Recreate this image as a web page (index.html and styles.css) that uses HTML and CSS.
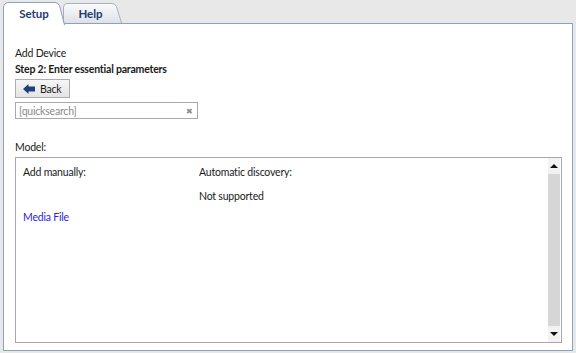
FILE: index.html
```html
<!DOCTYPE html>
<html>
<head>
    <title>Add Device</title>
    <link rel="stylesheet" href="styles.css">
</head>
<body>
    <div class="tabs">
        <div class="tab tab-active">
            <svg class="tab-shape" width="62" height="23" viewBox="0 0 62 23">
                <path d="M0.5 23 L0.5 6 Q0.5 0.5 6 0.5 L52 0.5 Q55 0.5 56.5 3.5 L61.5 23" fill="#ffffff" stroke="#8e9fbf"/>
            </svg>
            <span>Setup</span>
        </div>
        <div class="tab">
            <svg class="tab-shape" width="59" height="20" viewBox="0 0 59 20">
                <defs>
                    <linearGradient id="helpGrad" x1="0" y1="0" x2="0" y2="1">
                        <stop offset="0" stop-color="#fbfbfc"/>
                        <stop offset="1" stop-color="#dde1e8"/>
                    </linearGradient>
                </defs>
                <path d="M0.5 20 L0.5 5 Q0.5 0.5 5 0.5 L49 0.5 Q52 0.5 53.5 3.5 L58.5 20" fill="url(#helpGrad)" stroke="#a6b0c3"/>
            </svg>
            <span>Help</span>
        </div>
    </div>

    <div class="panel">
        <div class="title">Add Device</div>
        <div class="step">Step 2: Enter essential parameters</div>

        <button class="back-button">
            <svg width="12" height="10" viewBox="0 0 12 10">
                <path d="M0 5 L5.5 0 L5.5 2.5 L12 2.5 L12 7.5 L5.5 7.5 L5.5 10 Z" fill="#1f3f7f"/>
            </svg>
            Back
        </button>

        <div class="search">
            <input type="text" placeholder="[quicksearch]">
            <span class="search-clear">&#x2716;</span>
        </div>

        <div class="label">Model:</div>

        <div class="model-box">
            <div class="model-list">
                <div>Add manually:</div>
                <div>Automatic discovery:</div>
                <div></div>
                <div>Not supported</div>
                <div class="media-row"><a href="#" class="link">Media File</a></div>
                <div></div>
            </div>
            <div class="scrollbar">
                <div class="scroll-arrow"><span class="arrow-up"></span></div>
                <div class="scroll-track"></div>
                <div class="scroll-arrow"><span class="arrow-down"></span></div>
            </div>
        </div>
    </div>
</body>
</html>
```

FILE: styles.css
```css
body {
    margin: 0;
    background-color: #e8e8e8;
    font-family: Lato, "Open Sans", Arial, sans-serif;
    font-size: 10.5px;
    letter-spacing: -0.2px;
    color: #1a1a1a;
    height: 353px;
    display: flex;
    flex-direction: column;
}

.tabs {
    display: flex;
    align-items: flex-end;
    padding: 5px 0 0 3px;
    height: 20px;
    margin-bottom: -2px;
    position: relative;
    z-index: 2;
}

.tab {
    position: relative;
    width: 59px;
    height: 20px;
    margin-left: -2px;
    margin-bottom: 2px;
    display: flex;
    justify-content: center;
    align-items: center;
    font-weight: bold;
    font-size: 11.5px;
    letter-spacing: 0;
    color: #1f3b6f;
    z-index: 1;
}

.tab span {
    position: relative;
    margin-right: 4px;
    margin-top: 1px;
}

.tab-active {
    width: 62px;
    height: 23px;
    margin-left: 0;
    margin-bottom: 0;
    z-index: 2;
}

.tab-active span {
    margin-right: 0;
    margin-top: -1px;
}

.tab-shape {
    position: absolute;
    left: 0;
    top: 0;
}

.panel {
    flex: 1;
    margin: 0 3px 2px 3px;
    background-color: #ffffff;
    border: 1px solid #8e9fbf;
    padding: 21px 10px 7px 11px;
    display: flex;
    flex-direction: column;
}

.title {
    line-height: 16px;
}

.step {
    font-weight: bold;
    line-height: 16px;
    margin-top: 0;
}

.back-button {
    align-self: flex-start;
    margin-top: 2px;
    height: 19px;
    width: 55px;
    padding: 0 0 0 7px;
    display: flex;
    align-items: center;
    gap: 5px;
    font-family: inherit;
    font-size: 10.5px;
    letter-spacing: -0.2px;
    color: #1a1a1a;
    border: 1px solid #adadad;
    background: linear-gradient(#f6f6f6, #e4e4e4);
}

.search {
    margin-top: 4px;
    width: 181px;
    height: 15px;
    border: 1px solid #a9a9a9;
    display: flex;
    align-items: center;
}

.search input {
    flex: 1;
    min-width: 0;
    border: none;
    outline: none;
    padding: 0 3px;
    font-family: inherit;
    font-size: 10.5px;
    letter-spacing: -0.2px;
    height: 13px;
}

.search input::placeholder {
    color: #8a8a8a;
}

.search-clear {
    font-size: 8px;
    color: #8c8c8c;
    margin-right: 4px;
}

.label {
    margin-top: 20px;
    line-height: 16px;
}

.model-box {
    flex: 1;
    margin-top: 2px;
    border: 1px solid #a7a7ae;
    display: flex;
}

.model-list {
    flex: 1;
    display: grid;
    grid-template-columns: 176px 1fr;
    grid-auto-rows: min-content;
    row-gap: 11px;
    padding: 8px 7px;
    line-height: 13px;
}

.media-row {
    margin-top: -3px;
}

.link {
    color: #2b1ce0;
    text-decoration: none;
}

.scrollbar {
    width: 12px;
    margin-right: 1px;
    display: flex;
    flex-direction: column;
}

.scroll-arrow {
    height: 16px;
    background-color: #f2f2f2;
    display: flex;
    justify-content: center;
    align-items: center;
}

.scroll-track {
    flex: 1;
    background-color: #d6d6d6;
}

.arrow-up,
.arrow-down {
    width: 0;
    height: 0;
    border-left: 4px solid transparent;
    border-right: 4px solid transparent;
}

.arrow-up {
    border-bottom: 4px solid #111111;
}

.arrow-down {
    border-top: 4px solid #111111;
}
```
